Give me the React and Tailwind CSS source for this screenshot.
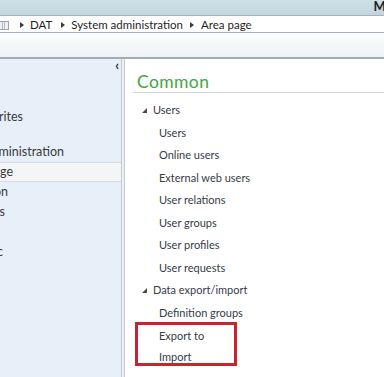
const font = { fontFamily: 'Lato, "Open Sans", sans-serif' }

function Tri({ className = '' }) {
  return (
    <svg width="4" height="6" viewBox="0 0 4 6" className={className}>
      <path d="M0 0 L4 3 L0 6 Z" fill="#3b3b3b" />
    </svg>
  )
}

function Expanded() {
  return (
    <svg width="5" height="5" viewBox="0 0 5 5">
      <path d="M5 0 L5 5 L0 5 Z" fill="#4a4a4a" />
    </svg>
  )
}

// left nav entries, clipped at the left edge of the window
function NavItem({ label, right, selected }) {
  return (
    <div className={'h-[20px] flex items-center ' + (selected ? 'bg-[#f4f5f6] border-y border-[#d9dde1]' : '')}>
      <div className="flex justify-end whitespace-nowrap" style={{ width: right }}>{label}</div>
    </div>
  )
}

const users = ['Users', 'Online users', 'External web users', 'User relations', 'User groups', 'User profiles', 'User requests']

export default function App() {
  return (
    <div className="w-[384px] h-[377px] overflow-hidden bg-white text-[#2b2b2b] flex flex-col" style={font}>
      {/* title band */}
      <div className="h-[15px] bg-gradient-to-b from-[#cfe0e8] to-[#c2d5de] flex justify-end items-start overflow-hidden">
        <span className="text-[13px] leading-[12px] mr-[-5px] text-[#222] font-bold">Mi</span>
      </div>
      {/* address bar */}
      <div className="h-[18px] pt-[2px] bg-white border-y border-[#a6b1ba] flex items-center text-[11.5px] text-[#1e1e1e] whitespace-nowrap">
        <div className="w-[10px] h-[9px] border border-[#9aa4ad] bg-[#eef1f4] grid grid-cols-3 ml-[-1px]">
          <span className="border-r border-[#b5bcc3]" />
          <span className="border-r border-[#b5bcc3]" />
          <span />
        </div>
        <Tri className="ml-[11px]" />
        <span className="ml-[6px]">DAT</span>
        <Tri className="ml-[9px]" />
        <span className="ml-[6px]">System administration</span>
        <Tri className="ml-[7px]" />
        <span className="ml-[7px]">Area page</span>
      </div>
      {/* toolbar */}
      <div className="h-[26px] bg-gradient-to-b from-[#fcfdfe] to-[#edf2f7] border-b-2 border-[#a3abb3]" />
      {/* main */}
      <div className="flex-1 flex min-h-0">
        <div className="w-[121px] bg-[#e7eff8] relative flex flex-col overflow-hidden text-[12.5px] text-[#3a3a3a]">
          <span className="absolute right-[2px] top-[0px] text-[13px] leading-[13px] font-bold text-[#222]">‹</span>
          <div className="h-[48px]" />
          <NavItem label="Favorites" right={23} />
          <div className="h-[15px]" />
          <NavItem label="System administration" right={64} />
          <NavItem label="Area page" right={13} selected />
          <NavItem label="Common" right={8} />
          <NavItem label="Inquiries" right={5} />
          <div className="h-[20px]" />
          <NavItem label="Periodic" right={3} />
        </div>
        <div className="w-[4px] border-x border-[#c4cad0] bg-[#eef1f4]" />
        <div className="flex-1 flex flex-col pl-[8px]">
          <div className="h-[34px] flex items-end border-b border-[#d6d6d6]">
            <span className="ml-[4px] text-[17.5px] leading-[20px] text-[#46a544] tracking-[0.4px]">Common</span>
          </div>
          <div className="text-[11px] text-[#353b48] mt-[6px] whitespace-nowrap">
            <div className="h-[22.5px] flex items-center">
              <span className="ml-[9px]"><Expanded /></span>
              <span className="ml-[6px]">Users</span>
            </div>
            {users.map((u) => (
              <div key={u} className="h-[22.5px] flex items-center pl-[26px]">{u}</div>
            ))}
            <div className="h-[22.5px] flex items-center">
              <span className="ml-[9px]"><Expanded /></span>
              <span className="ml-[6px]">Data export/import</span>
            </div>
            <div className="h-[22.5px] flex items-center pl-[26px]">Definition groups</div>
            <div className="w-[102px] ml-[2px] -mt-[2px] border-[3px] border-[#c8232e] h-[44px] flex flex-col">
              <div className="h-[22px] flex items-center pl-[21px]">Export to</div>
              <div className="h-[16px] leading-[16px] pt-[2px] pl-[21px]">Import</div>
            </div>
          </div>
        </div>
      </div>
    </div>
  )
}
